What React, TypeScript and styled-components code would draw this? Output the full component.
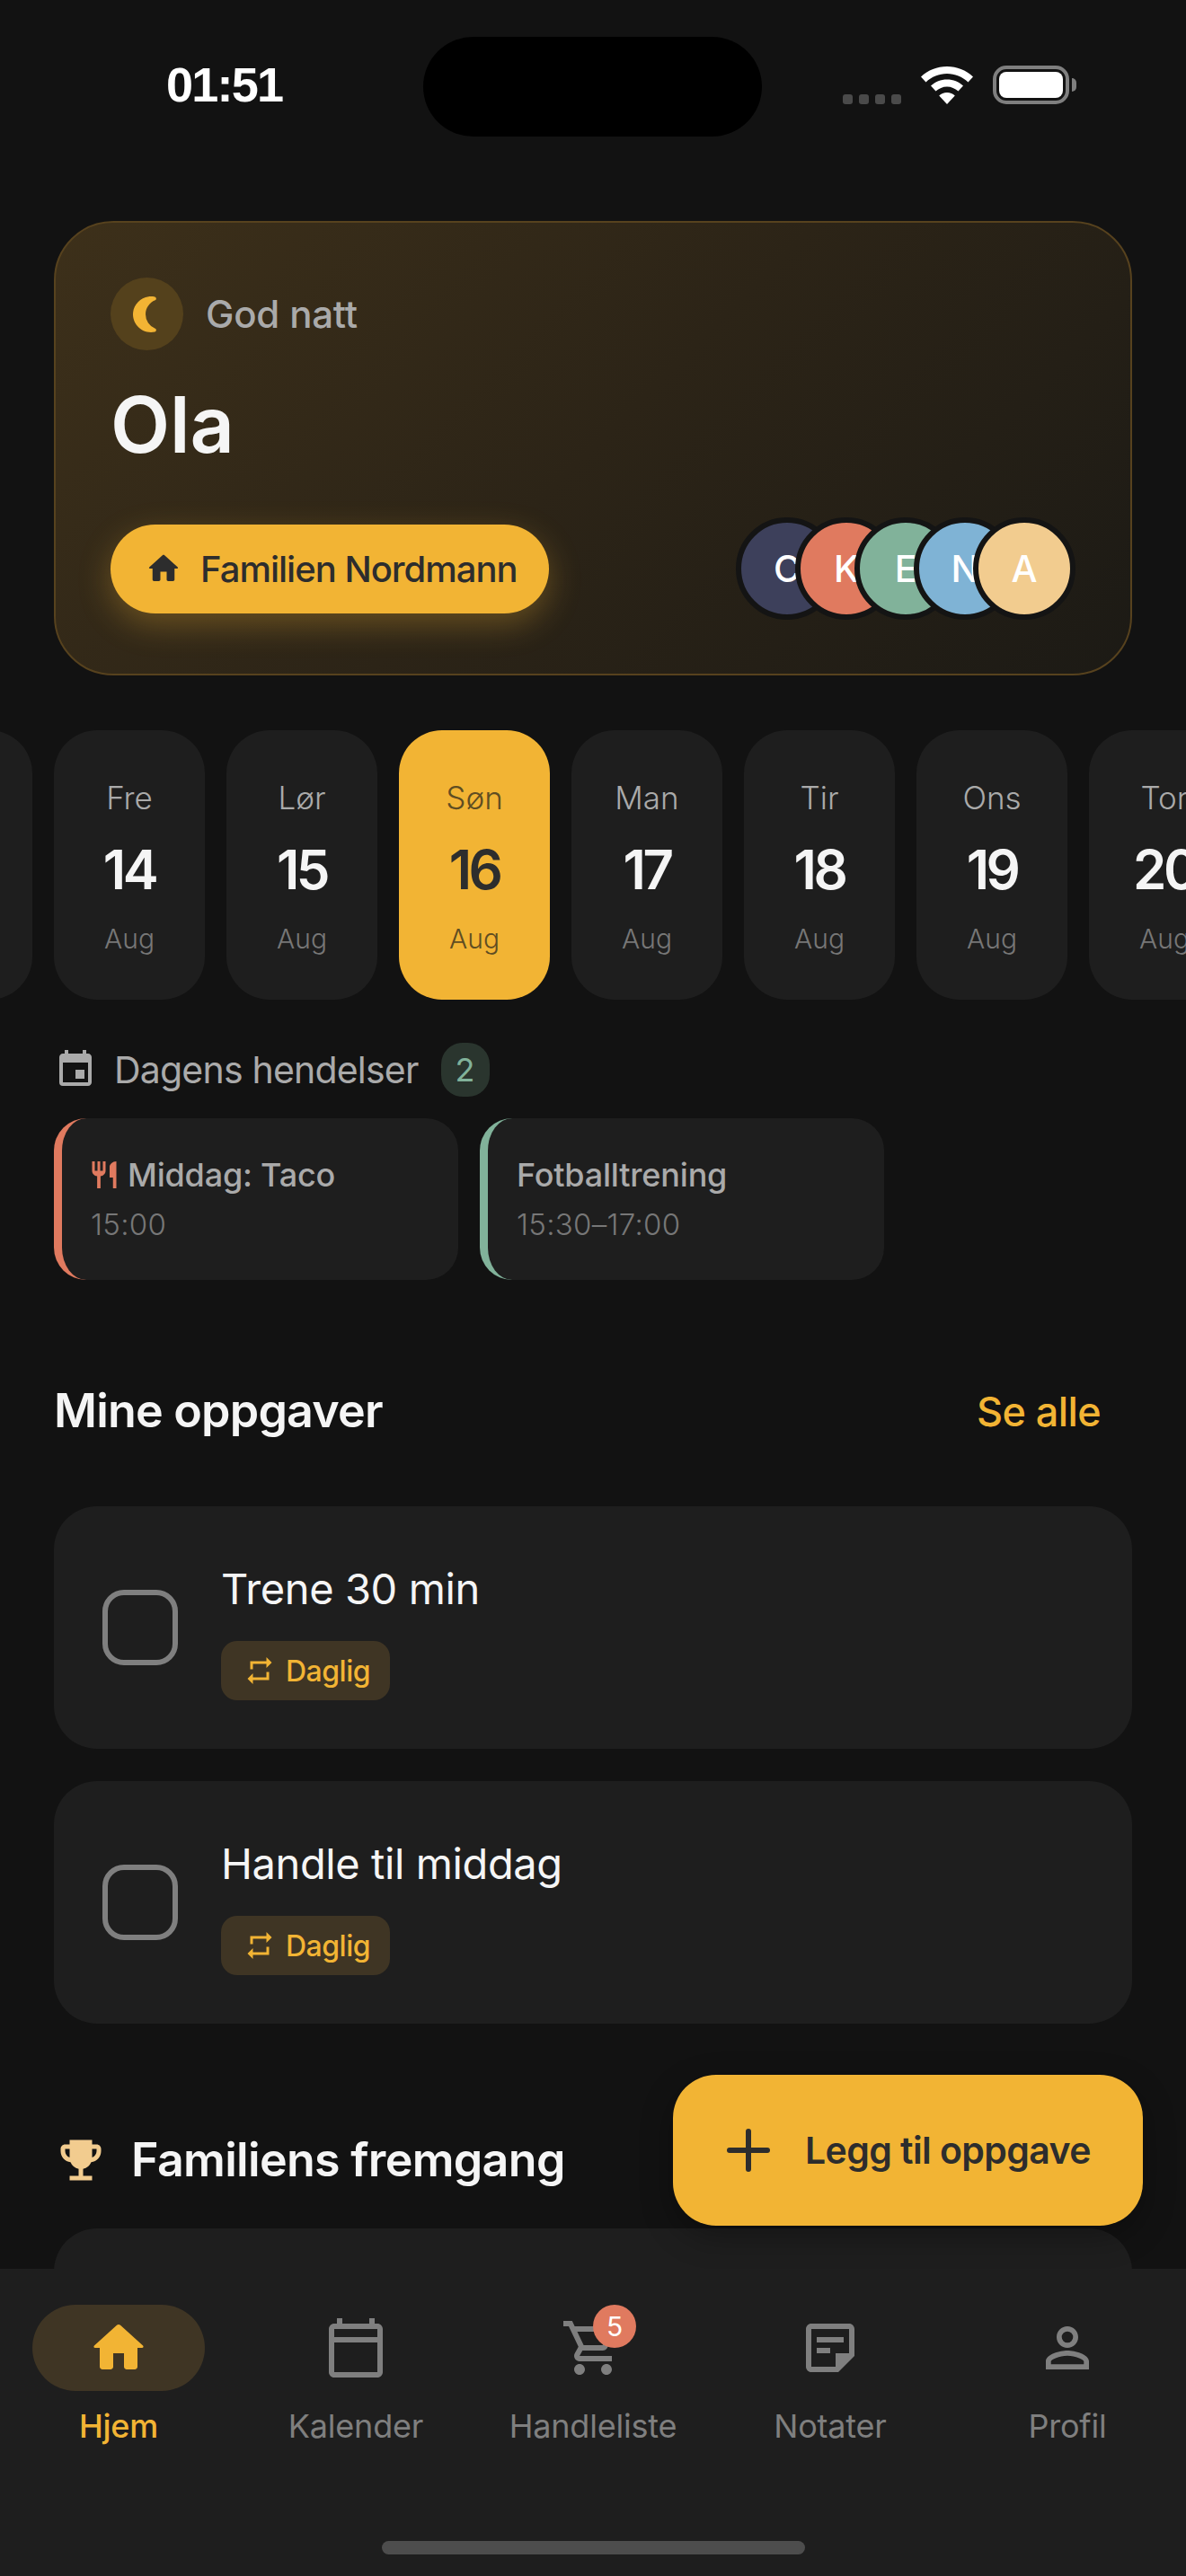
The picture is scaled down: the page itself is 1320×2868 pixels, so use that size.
import React from "react";
import styled, { createGlobalStyle } from "styled-components";
import {
  MdEmojiEvents,
  MdEvent,
  MdNightlightRound,
  MdOutlineCalendarToday,
  MdOutlineShoppingCart,
  MdOutlineStickyNote2,
  MdPersonOutline,
  MdRepeat,
  MdRestaurant,
} from "react-icons/md";
import { Plus } from "lucide-react";

const FONT = `"Inter", "Noto Sans", sans-serif`;
const AMBER = "#f2b434";

const GlobalStyle = createGlobalStyle`
  html, body {
    margin: 0;
    padding: 0;
    background: #121212;
  }
  * {
    box-sizing: border-box;
  }
`;

const HomeIcon: React.FC<{ size: number }> = ({ size }) => (
  <svg width={size} height={size} viewBox="0 0 24 24" fill="currentColor">
    <path d="M10 19v-5h4v5c0 .55.45 1 1 1h3c.55 0 1-.45 1-1v-7h1.7c.46 0 .68-.57.33-.87L12.67 3.6c-.38-.34-.96-.34-1.34 0l-8.36 7.53c-.34.3-.13.87.33.87H5v7c0 .55.45 1 1 1h3c.55 0 1-.45 1-1z" />
  </svg>
);

const WifiIcon = () => (
  <svg width="58" height="42" viewBox="0 0 58 42" fill="#fff">
    <path d="M29 0C18 0 8 4 0 11.500L5.500 17.500C12 11.500 20 8 29 8s17 3.500 23.500 9.500L58 11.500C50 4 40 0 29 0z" />
    <path d="M29 14.500c-7 0-13 2.500-18 7l5.500 6c3.500-3 7.800-5 12.500-5s9 2 12.500 5l5.500-6c-5-4.500-11-7-18-7z" />
    <path d="M29 29c-3.500 0-6.500 1.300-8.800 3.400L29 42l8.800-9.600C35.500 30.300 32.500 29 29 29z" />
  </svg>
);

const days = [
  { name: "Tor", num: "13" },
  { name: "Fre", num: "14" },
  { name: "Lør", num: "15" },
  { name: "Søn", num: "16", active: true },
  { name: "Man", num: "17" },
  { name: "Tir", num: "18" },
  { name: "Ons", num: "19" },
  { name: "Tor", num: "20" },
];

const members = [
  { letter: "C", color: "#3d405b" },
  { letter: "K", color: "#e07a5f" },
  { letter: "E", color: "#81b29a" },
  { letter: "N", color: "#7fb3d5" },
  { letter: "A", color: "#f2cc8f" },
];

const tasks = ["Trene 30 min", "Handle til middag"];

export default function App() {
  return (
    <Screen>
      <GlobalStyle />
      <StatusBar>
        <Clock>01:51</Clock>
        <Island />
        <StatusIcons>
          <SignalDots>
            <i />
            <i />
            <i />
            <i />
          </SignalDots>
          <WifiIcon />
          <Battery>
            <BatteryFill />
            <BatteryNub />
          </Battery>
        </StatusIcons>
      </StatusBar>

      <HeroCard>
        <GreetingRow>
          <MoonBubble>
            <MdNightlightRound size={48} />
          </MoonBubble>
          <Greeting>God natt</Greeting>
        </GreetingRow>
        <HeroName>Ola</HeroName>
        <HeroFooter>
          <FamilyPill>
            <HomeIcon size={42} />
            <span>Familien Nordmann</span>
          </FamilyPill>
          <Avatars>
            {members.map((m) => (
              <Avatar key={m.letter} $color={m.color}>
                {m.letter}
              </Avatar>
            ))}
          </Avatars>
        </HeroFooter>
      </HeroCard>

      <DateStrip>
        {days.map((d) => (
          <DateCard key={d.num} $active={d.active}>
            <DayName $active={d.active}>{d.name}</DayName>
            <DayNumber $active={d.active}>{d.num}</DayNumber>
            <DayMonth $active={d.active}>Aug</DayMonth>
          </DateCard>
        ))}
      </DateStrip>

      <EventsHeader>
        <MdEvent size={48} />
        <EventsTitle>Dagens hendelser</EventsTitle>
        <CountBadge>2</CountBadge>
      </EventsHeader>

      <EventsRow>
        <EventCard $accent="#e07a5f">
          <EventTitle>
            <MealIcon>
              <MdRestaurant size={36} />
            </MealIcon>
            Middag: Taco
          </EventTitle>
          <EventTime>15:00</EventTime>
        </EventCard>
        <EventCard $accent="#81b29a">
          <EventTitle>Fotballtrening</EventTitle>
          <EventTime>15:30–17:00</EventTime>
        </EventCard>
      </EventsRow>

      <SectionHeader>
        <SectionTitle>Mine oppgaver</SectionTitle>
        <SeeAll>Se alle</SeeAll>
      </SectionHeader>

      <TaskList>
        {tasks.map((t) => (
          <TaskCard key={t}>
            <Checkbox />
            <TaskBody>
              <TaskTitle>{t}</TaskTitle>
              <RepeatChip>
                <MdRepeat size={36} />
                Daglig
              </RepeatChip>
            </TaskBody>
          </TaskCard>
        ))}
      </TaskList>

      <ProgressHeader>
        <TrophyIcon>
          <MdEmojiEvents size={60} />
        </TrophyIcon>
        <ProgressTitle>Familiens fremgang</ProgressTitle>
      </ProgressHeader>
      <ProgressCard />

      <Fab>
        <Plus size={72} strokeWidth={2} />
        Legg til oppgave
      </Fab>

      <BottomNav>
        <NavItem $active>
          <NavIconWrap $active>
            <HomeIcon size={72} />
          </NavIconWrap>
          Hjem
        </NavItem>
        <NavItem>
          <NavIconWrap>
            <MdOutlineCalendarToday size={72} />
          </NavIconWrap>
          Kalender
        </NavItem>
        <NavItem>
          <NavIconWrap>
            <MdOutlineShoppingCart size={72} />
            <CartBadge>5</CartBadge>
          </NavIconWrap>
          Handleliste
        </NavItem>
        <NavItem>
          <NavIconWrap>
            <MdOutlineStickyNote2 size={72} />
          </NavIconWrap>
          Notater
        </NavItem>
        <NavItem>
          <NavIconWrap>
            <MdPersonOutline size={72} />
          </NavIconWrap>
          Profil
        </NavItem>
        <HomeIndicator />
      </BottomNav>
    </Screen>
  );
}

const Screen = styled.div`
  position: relative;
  width: 1320px;
  height: 2868px;
  overflow: hidden;
  background: #121212;
  font-family: ${FONT};
  color: #f5f5f5;
`;

const StatusBar = styled.div`
  position: relative;
  height: 246px;
  padding: 63px 130px 0 185px;
  display: flex;
  justify-content: space-between;
  align-items: flex-start;
`;

const Clock = styled.div`
  font-family: "Liberation Sans", sans-serif;
  font-size: 54px;
  font-weight: 700;
  letter-spacing: -1.8px;
  line-height: 62px;
  color: #fff;
`;

const Island = styled.div`
  position: absolute;
  left: 471px;
  top: 41px;
  width: 377px;
  height: 111px;
  border-radius: 56px;
  background: #000;
`;

const StatusIcons = styled.div`
  display: flex;
  align-items: flex-end;
  gap: 22px;
  padding-top: 10px;
`;

const SignalDots = styled.div`
  display: flex;
  gap: 7px;
  i {
    display: block;
    width: 11px;
    height: 11px;
    border-radius: 3px;
    background: #4a4a4a;
  }
`;

const Battery = styled.div`
  position: relative;
  width: 85px;
  height: 43px;
  padding: 3px;
  border: 4px solid #7f7f7f;
  border-radius: 15px;
`;

const BatteryFill = styled.div`
  width: 100%;
  height: 100%;
  border-radius: 8px;
  background: #fff;
`;

const BatteryNub = styled.div`
  position: absolute;
  right: -12px;
  top: 10px;
  width: 5px;
  height: 15px;
  border-radius: 0 5px 5px 0;
  background: #7f7f7f;
`;

const HeroCard = styled.div`
  margin: 0 60px;
  height: 506px;
  padding: 61px;
  border: 2px solid #57421e;
  border-radius: 66px;
  background: linear-gradient(135deg, #3d301a 0%, #2c2417 50%, #1c1a15 100%);
`;

const GreetingRow = styled.div`
  display: flex;
  align-items: center;
  gap: 25px;
`;

const MoonBubble = styled.div`
  width: 81px;
  height: 81px;
  padding-right: 3px;
  border-radius: 50%;
  display: flex;
  align-items: center;
  justify-content: center;
  color: ${AMBER};
  background: #54411c;
`;

const Greeting = styled.div`
  font-size: 42px;
  font-weight: 500;
  letter-spacing: -0.2px;
  color: #aaaaaa;
`;

const HeroName = styled.div`
  margin-top: 30px;
  font-size: 86px;
  line-height: 106px;
  font-weight: 600;
  color: #f5f5f5;
`;

const HeroFooter = styled.div`
  margin-top: 50px;
  display: flex;
  justify-content: space-between;
  align-items: center;
`;

const FamilyPill = styled.div`
  width: 488px;
  height: 99px;
  padding-left: 38px;
  display: flex;
  align-items: center;
  gap: 20px;
  border-radius: 50px;
  font-size: 40px;
  font-weight: 500;
  letter-spacing: -1px;
  color: #2d2d2d;
  background: ${AMBER};
  box-shadow: 0 12px 36px rgba(242, 180, 52, 0.3);
`;

const Avatars = styled.div`
  display: flex;
`;

const Avatar = styled.div<{ $color: string }>`
  width: 114px;
  height: 114px;
  border: 6px solid #141414;
  border-radius: 50%;
  display: flex;
  align-items: center;
  justify-content: center;
  font-size: 41px;
  font-weight: 500;
  color: #fff;
  background: ${(p) => p.$color};
  &:not(:first-child) {
    margin-left: -48px;
  }
`;

const DateStrip = styled.div`
  margin: 61px 0 0 -132px;
  display: flex;
  gap: 24px;
`;

const DateCard = styled.div<{ $active?: boolean }>`
  flex: 0 0 168px;
  height: 300px;
  padding-top: 53px;
  display: flex;
  flex-direction: column;
  align-items: center;
  border-radius: 48px;
  background: ${(p) => (p.$active ? AMBER : "#1e1e1e")};
`;

const DayName = styled.div<{ $active?: boolean }>`
  font-size: 35px;
  line-height: 44px;
  font-weight: 300;
  color: ${(p) => (p.$active ? "#5f4d22" : "#aaaaaa")};
`;

const DayNumber = styled.div<{ $active?: boolean }>`
  margin-top: 22px;
  font-size: 60px;
  line-height: 72px;
  font-weight: 600;
  letter-spacing: -3.5px;
  color: ${(p) => (p.$active ? "#2d2d2d" : "#f5f5f5")};
`;

const DayMonth = styled.div<{ $active?: boolean }>`
  margin-top: 21px;
  font-size: 30px;
  line-height: 40px;
  font-weight: 300;
  color: ${(p) => (p.$active ? "#5f4d22" : "#777777")};
`;

const EventsHeader = styled.div`
  margin: 48px 60px 0;
  height: 60px;
  display: flex;
  align-items: center;
  color: #aaaaaa;
`;

const EventsTitle = styled.div`
  margin-left: 19px;
  font-size: 41px;
  letter-spacing: -0.8px;
`;

const CountBadge = styled.div`
  margin-left: 25px;
  width: 54px;
  height: 60px;
  border-radius: 24px;
  display: flex;
  align-items: center;
  justify-content: center;
  font-size: 36px;
  color: #81b29a;
  background: #2a352e;
`;

const EventsRow = styled.div`
  margin: 24px 60px 0;
  display: flex;
  gap: 24px;
`;

const EventCard = styled.div<{ $accent: string }>`
  width: 450px;
  height: 180px;
  padding: 40px 30px 0 32px;
  border-left: 9px solid ${(p) => p.$accent};
  border-radius: 36px;
  background: #1e1e1e;
`;

const EventTitle = styled.div`
  display: flex;
  align-items: center;
  gap: 8px;
  font-size: 36px;
  line-height: 46px;
  font-weight: 500;
  letter-spacing: -0.2px;
  color: #aaaaaa;
`;

const MealIcon = styled.span`
  display: flex;
  margin-left: -3px;
  color: #e07a5f;
`;

const EventTime = styled.div`
  margin-top: 10px;
  font-size: 33px;
  line-height: 44px;
  font-weight: 300;
  letter-spacing: 0.3px;
  color: #777777;
`;

const SectionHeader = styled.div`
  margin: 112px 95px 0 60px;
  display: flex;
  justify-content: space-between;
  align-items: center;
`;

const SectionTitle = styled.div`
  font-size: 52px;
  line-height: 68px;
  font-weight: 600;
  letter-spacing: -0.8px;
  color: #f5f5f5;
`;

const SeeAll = styled.div`
  font-size: 45px;
  font-weight: 500;
  letter-spacing: -0.6px;
  color: ${AMBER};
`;

const TaskList = styled.div`
  margin: 72px 60px 0;
  display: flex;
  flex-direction: column;
  gap: 36px;
`;

const TaskCard = styled.div`
  height: 270px;
  padding-left: 54px;
  display: flex;
  align-items: center;
  gap: 48px;
  border-radius: 48px;
  background: #1e1e1e;
`;

const Checkbox = styled.div`
  width: 84px;
  height: 84px;
  border: 6px solid #7f7f7f;
  border-radius: 24px;
`;

const TaskBody = styled.div`
  margin-top: 8px;
  display: flex;
  flex-direction: column;
  align-items: flex-start;
  gap: 28px;
`;

const TaskTitle = styled.div`
  font-size: 47px;
  line-height: 60px;
  letter-spacing: -0.4px;
  color: #f5f5f5;
`;

const RepeatChip = styled.div`
  width: 188px;
  height: 66px;
  padding-left: 25px;
  display: flex;
  align-items: center;
  gap: 11px;
  border-radius: 18px;
  font-size: 32px;
  font-weight: 500;
  letter-spacing: -0.5px;
  color: ${AMBER};
  background: #3f3524;
`;

const ProgressHeader = styled.div`
  margin: 118px 60px 0;
  display: flex;
  align-items: center;
  gap: 26px;
`;

const TrophyIcon = styled.span`
  display: flex;
  color: #f2cc8f;
`;

const ProgressTitle = styled.div`
  font-size: 52px;
  line-height: 68px;
  font-weight: 600;
  letter-spacing: -0.7px;
  color: #f5f5f5;
`;

const ProgressCard = styled.div`
  margin: 42px 60px 0;
  height: 300px;
  border-radius: 48px;
  background: #1e1e1e;
`;

const Fab = styled.div`
  position: absolute;
  left: 749px;
  top: 2310px;
  width: 523px;
  height: 168px;
  padding-left: 48px;
  display: flex;
  align-items: center;
  gap: 27px;
  border-radius: 48px;
  font-size: 41px;
  font-weight: 600;
  letter-spacing: -0.6px;
  color: #2d2d2d;
  background: ${AMBER};
  box-shadow: 0 12px 36px rgba(0, 0, 0, 0.3);
`;

const BottomNav = styled.div`
  position: absolute;
  left: 0;
  right: 0;
  bottom: 0;
  height: 342px;
  padding-top: 40px;
  display: grid;
  grid-template-columns: repeat(5, 1fr);
  align-items: start;
  background: #1e1e1e;
`;

const NavItem = styled.div<{ $active?: boolean }>`
  display: flex;
  flex-direction: column;
  align-items: center;
  gap: 16px;
  font-size: 36px;
  line-height: 46px;
  font-weight: ${(p) => (p.$active ? 500 : 400)};
  letter-spacing: -0.2px;
  color: ${(p) => (p.$active ? AMBER : "#7f7f7f")};
`;

const NavIconWrap = styled.div<{ $active?: boolean }>`
  position: relative;
  width: 192px;
  height: 96px;
  display: flex;
  align-items: center;
  justify-content: center;
  border-radius: 48px;
  background: ${(p) => (p.$active ? "#3f3524" : "transparent")};
`;

const CartBadge = styled.div`
  position: absolute;
  left: 96px;
  top: 0;
  width: 48px;
  height: 48px;
  border-radius: 50%;
  display: flex;
  align-items: center;
  justify-content: center;
  font-size: 30px;
  color: #fff;
  background: #e07a5f;
`;

const HomeIndicator = styled.div`
  position: absolute;
  left: 425px;
  top: 303px;
  width: 471px;
  height: 15px;
  border-radius: 8px;
  background: #4d4d4d;
`;
